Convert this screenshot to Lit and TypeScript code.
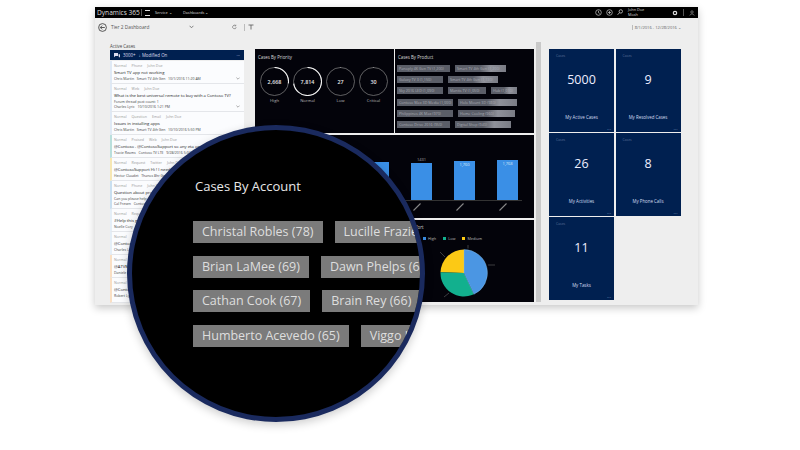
import { LitElement, html, css, svg } from "lit";
import { customElement } from "lit/decorators.js";

const items = [
  { c: "#dfe9f5", h: 23, m: ["Normal", "Phone", "John Doe"], t: "Smart TV app not working", s: ["Chris Martin   Smart TV 4th Gen   10/1/2016 11:20 AM"], chev: true },
  { c: "#dfe9f5", h: 28, m: ["Normal", "Web", "John Doe"], t: "What is the best universal remote to buy with a Contoso TV?", s: ["Forum thread post count: 1", "Charles Lyric   10/10/2016 1:21 PM"], chev: true },
  { c: "#dfe9f5", h: 23, m: ["Normal", "Question", "Email", "John Doe"], t: "Issues in installing apps", s: ["Chris Martin   Smart TV 4th Gen   10/10/2016 5:50 PM"] },
  { c: "#b9dfdc", h: 23, m: ["Normal", "Praised", "Web", "John Doe"], t: "@Contoso . @ContosoSupport so any eta on the fix", s: ["Tracie Reams   Contoso TV LTE   9/28/2016 5:04 PM"] },
  { c: "#f6e7b4", h: 23, m: ["Normal", "Request", "Twitter", "John Doe"], t: "@ContosoSupport Hi ! I need help", s: ["Hector Claudet   Thanos 8hr Gen"] },
  { c: "#c9dff0", h: 28, m: ["Normal", "Phone", "John Doe"], t: "Question about product", s: ["Can you please help me", "Cal Fresen   Contoso TV"] },
  { c: "#e4eef7", h: 23, m: ["Normal", "Request"], t: "#Help this guy", s: ["Noelle Cory"] },
  { c: "#e4eef7", h: 23, m: ["Normal"], t: "@Contoso help", s: ["Charles Lyric"] },
  { c: "#f9dfc4", h: 23, m: ["Normal"], t: "@ATVM team", s: ["Daniele Ross"] },
  { c: "#f9dfc4", h: 25, m: ["Normal"], t: "@Contoso help", s: ["Robert Lyon"] },
];

const rings = [
  { v: "2,668", l: "High", p: 0.27 },
  { v: "7,814", l: "Normal", p: 0.72 },
  { v: "27", l: "Low", p: 0.004 },
  { v: "30", l: "Critical", p: 0.004 },
];

const productRows: [string, number][][] = [
  [["Panoply 4K Gen TV (1,200)", 53], ["Smart TV 4th Gen (1,200)", 51]],
  [["Galaxy TV 3 (1,150)", 46], ["Smart TV 4th Gen (1,130)", 50]],
  [["Sky 2016 LED (1,090)", 46], ["Mantis TV (1,050)", 38], ["Hub (1,010)", 26]],
  [["Contoso Max 3D Media (1,000)", 56], ["Holo Mount 3D (980)", 59]],
  [["Philippines 4K Max (970)", 56], ["Home Cooling (960)", 57]],
  [["Contoso Drive 2016 (950)", 53], ["Digital Shop (940)", 56]],
];

const bars = [
  { v: "", h: 38, inside: false },
  { v: "1431", h: 37, inside: false },
  { v: "1,760", h: 39, inside: true },
  { v: "1,768", h: 40, inside: true },
];

const tiles = [
  { v: "5000", l: "My Active Cases" },
  { v: "9", l: "My Resolved Cases" },
  { v: "26", l: "My Activities" },
  { v: "8", l: "My Phone Calls" },
  { v: "11", l: "My Tasks" },
];

const lens = [
  ["Christal Robles (78)", "Lucille Frazier (70)"],
  ["Brian LaMee (69)", "Dawn Phelps (68)"],
  ["Cathan Cook (67)", "Brain Rey (66)", "Anne Bell (66)"],
  ["Humberto Acevedo (65)", "Viggo Holt (64)"],
];

function slice(a0: number, a1: number, r: number) {
  const p = (a: number) => {
    const t = ((a - 90) * Math.PI) / 180;
    return `${(r * Math.cos(t)).toFixed(2)} ${(r * Math.sin(t)).toFixed(2)}`;
  };
  return `M0 0L${p(a0)}A${r} ${r} 0 ${a1 - a0 > 180 ? 1 : 0} 1 ${p(a1)}Z`;
}

@customElement("app-root")
export class AppRoot extends LitElement {
  static styles = css`
    :host {
      display: block;
      position: relative;
      width: 800px;
      height: 450px;
      overflow: hidden;
      background: #fff;
      font-family: "Open Sans", "Noto Sans", sans-serif;
    }
    .page { padding: 7px 102px 0 95px; }
    .window {
      height: 298px;
      background: #eeeeee;
      box-shadow: 0 3px 8px rgba(0,0,0,.22);
      display: flex;
      flex-direction: column;
    }
    .top {
      height: 11px;
      flex: none;
      background: #000;
      color: #ddd;
      display: flex;
      align-items: center;
      font-size: 3.8px;
      padding: 0 3px 0 2px;
    }
    .brand { font-size: 6.6px; color: #dedede; width: 44px; white-space: nowrap; }
    .sep { width: 1px; height: 7px; background: #555; margin-right: 3px; }
    .burger { width: 5px; height: 4px; border-top: 1px solid #ddd; border-bottom: 1px solid #ddd; margin-right: 5px; position: relative; }
    .nav { white-space: nowrap; }
    .nav.a { width: 28px; }
    .spacer { flex: 1; }
    .top svg { display: block; }
    .ticon { margin-right: 4px; }
    .ticon.last { margin-right: 5px; }
    .who { width: 44px; line-height: 4.5px; font-size: 3.8px; }
    .sub {
      height: 24px;
      box-sizing: border-box;
      flex: none;
      display: flex;
      align-items: center;
      padding: 0 17px 6px 3px;
      font-size: 4.8px;
      color: #555;
    }
    .sub .title { margin-left: 4px; width: 78px; }
    .date { font-size: 4.1px; color: #666; border-left: 1px solid #bbb; padding-left: 2px; }
    .main { flex: 1; display: flex; min-height: 0; padding-left: 15px; }
    .left { width: 134px; flex: none; margin-right: 11px; padding-top: 1px; }
    .left .cap { font-size: 4.4px; color: #444; height: 7px; line-height: 6px; }
    .head {
      height: 10px;
      background: #002050;
      color: #dde;
      font-size: 4.4px;
      display: flex;
      align-items: center;
      padding: 0 4px;
      gap: 3px;
    }
    .list { display: flex; flex-direction: column; gap: 0; padding-top: 1px; }
    .item {
      position: relative;
      background: #fbfcfe;
      border-left: 2px solid;
      border-bottom: 1px solid #e4e6ea;
      box-sizing: border-box;
      padding: 2px 0 0 2px;
      overflow: hidden;
      white-space: nowrap;
    }
    .meta { display: flex; gap: 5px; font-size: 3.6px; color: #999; height: 6px; line-height: 5px; }
    .ttl { font-size: 4.2px; color: #222; line-height: 7px; height: 7px; }
    .ss { font-size: 3.5px; color: #444; line-height: 5.4px; white-space: pre; }
    .chev { position: absolute; right: 4px; bottom: 3px; }
    .charts { width: 279px; flex: none; display: flex; flex-direction: column; gap: 2px; margin: 7px 0 3px; }
    .row1 { height: 84px; display: flex; gap: 1px; }
    .panel { background: #03030a; color: #ddd; position: relative; }
    .row1 .panel { flex: 1; }
    .ptitle { font-size: 4.4px; padding: 5px 0 0 3px; height: 7px; }
    .rings { display: flex; padding: 5.5px 0 0 5px; gap: 4px; }
    .ring { width: 29px; text-align: center; font-size: 4.2px; color: #bbb; }
    .ring svg { display: block; margin-bottom: 2.5px; }
    .ring text { font-size: 5.4px; fill: #e6e6e6; font-weight: 600; text-anchor: middle; font-family: "Open Sans", sans-serif; }
    .ptags { padding: 4px 0 0 2px; display: flex; flex-direction: column; gap: 4.2px; }
    .ptr { display: flex; gap: 5px; }
    .ptag { background: #5b5e68; color: #a9abb3; font-size: 3.7px; height: 7px; line-height: 7px; padding: 0 2px; box-sizing: border-box; white-space: nowrap; overflow: hidden; }
    .ptag.hi { background: linear-gradient(90deg, #5b5e68 50%, #8f919a 70%, #7a7c85); }
    .row2 { height: 83px; }
    .barwrap { height: 65px; display: flex; align-items: flex-end; padding-left: 113px; gap: 22px; border-bottom: 1px solid #333; margin-right: 12px; }
    .bar { width: 21px; background: #3a8fe6; position: relative; }
    .bar span { position: absolute; left: 0; right: 0; top: -6px; text-align: center; font-size: 4px; color: #aaa; }
    .bar span.in { top: 1px; color: #dbe9f8; }
    .tick { display: block; margin-top: 1px; }
    .ticks { display: flex; padding-left: 114px; gap: 33px; }
    .row3 { flex: 1; }
    .legend { position: absolute; left: 168px; top: 15.5px; display: flex; gap: 7px; font-size: 3.8px; color: #bbb; align-items: center; }
    .legend i { display: inline-block; width: 3px; height: 3px; margin-right: 2px; }
    .ptitle2 { position: absolute; left: 138px; top: 4px; font-size: 4.4px; }
    .pie { position: absolute; left: 173px; top: 17px; }
    .scroll { width: 5px; flex: none; background: #c9c9c9; margin: 0 8px 3px 2px; }
    .tiles { display: grid; grid-template-columns: 65px 65px; grid-auto-rows: 83px; gap: 1px 1.5px; align-content: start; margin-top: 7px; }
    .tile {
      background: #002050;
      color: #eef;
      display: flex;
      flex-direction: column;
      align-items: center;
      position: relative;
      padding-top: 21px;
      box-sizing: border-box;
    }
    .tile .v { font-size: 12.5px; line-height: 20px; height: 34px; }
    .tile .l { font-size: 4.4px; margin-top: 10px; color: #d6def0; }
    .tile .c { position: absolute; left: 7px; top: 4px; font-size: 3.4px; color: #5a6f96; }
    .tile .d { position: absolute; right: 3px; bottom: 0; font-size: 5px; line-height: 5px; color: #9fb0d0; }
    .lens {
      position: absolute;
      left: 127px;
      top: 125px;
      width: 298px;
      height: 297px;
      box-sizing: border-box;
      border-radius: 50%;
      border: 5px solid #1a2a5e;
      background: #000;
      overflow: hidden;
      box-shadow: 0 3px 10px rgba(0,0,0,.2);
    }
    .linner { padding: 49px 0 0 61px; width: 420px; }
    .lt { font-size: 13px; line-height: 14px; color: #e8e8e8; margin: 0 0 28px 2px; }
    .lrow { display: flex; gap: 12px; height: 22px; margin-bottom: 12.7px; }
    .ltag {
      background: #7b7b7b;
      color: #dedede;
      font-size: 12.5px;
      line-height: 21px;
      padding: 0 9px;
      white-space: nowrap;
    }
  `;

  render() {
    const r = 14;
    const circ = 2 * Math.PI * r;
    return html`
      <div class="page">
        <div class="window">
          <div class="top">
            <span class="brand">Dynamics 365</span>
            <span class="sep"></span>
            <span class="burger"></span>
            <span class="nav a">Service ⌄</span>
            <span class="nav">Dashboards ⌄</span>
            <span class="spacer"></span>
            <svg class="ticon" width="7" height="7" viewBox="0 0 7 7" fill="none" stroke="#ccc" stroke-width=".7"><circle cx="3.5" cy="3.5" r="2.8"/><path d="M3.5 1.8v1.9l1.2.7"/></svg>
            <svg class="ticon" width="7" height="7" viewBox="0 0 7 7" fill="none" stroke="#ccc" stroke-width=".7"><circle cx="3.5" cy="3.5" r="2.8"/><path d="M3.5 2v3M2 3.5h3"/></svg>
            <svg class="ticon last" width="6" height="7" viewBox="0 0 6 7" fill="none" stroke="#ccc" stroke-width=".8"><circle cx="3.8" cy="2.4" r="1.7"/><path d="M2.6 3.6L.6 5.8"/></svg>
            <span class="who">John Doe<br />Mosh</span>
            <svg width="6" height="6" viewBox="0 0 6 6" style="margin-right:5px"><circle cx="3" cy="3" r="1.7" fill="none" stroke="#ddd" stroke-width="1.2"/></svg>
            <span class="sep" style="margin-right:5px"></span>
            <svg width="6" height="6" viewBox="0 0 6 6" fill="none" stroke="#aaa" stroke-width=".6"><circle cx="3" cy="2" r="1.2"/><path d="M.8 5.5c.3-2 4.1-2 4.4 0"/></svg>
          </div>
          <div class="sub">
            <svg width="9" height="9" viewBox="0 0 9 9" fill="none" stroke="#333" stroke-width=".8"><circle cx="4.5" cy="4.5" r="3.9"/><path d="M6.8 4.5H2.4M4.2 2.6L2.3 4.5l1.9 1.9"/></svg>
            <span class="title">Tier 2 Dashboard</span>
            <svg width="5" height="4" viewBox="0 0 5 4" fill="none" stroke="#666" stroke-width=".8"><path d="M.6.8l1.9 2 1.9-2"/></svg>
            <span style="width:38px"></span>
            <svg width="5" height="6" viewBox="0 0 5 6" fill="none" stroke="#777" stroke-width=".7"><path d="M4.2 3.2a1.8 1.8 0 1 1-.6-1.6M3.8.7v1.2H2.6"/></svg>
            <span style="width:7px"></span>
            <span class="sep" style="margin-right:3px;background:#bbb"></span>
            <svg width="6" height="6" viewBox="0 0 6 6" fill="none" stroke="#555" stroke-width=".8"><path d="M.5 1h5M3 1v4.5"/></svg>
            <span class="spacer"></span>
            <span class="date">8/1/2016 - 12/28/2016 ⌄</span>
          </div>
          <div class="main">
            <div class="left">
              <div class="cap">Active Cases</div>
              <div class="head">
                <svg width="6" height="5" viewBox="0 0 6 5" fill="#dde"><path d="M0 0h4v3H1.4L0 4.2zM4.6 1.2H6v3.6L4.8 3.6H2.4v-.2h2.2z"/></svg>
                <span>3000+</span><span>↓ Modified On</span><span class="spacer"></span><span>···</span>
              </div>
              <div class="list">
                ${items.map(
                  (i) => html`<div class="item" style="height:${i.h}px;border-left-color:${i.c}">
                    <div class="meta">${i.m.map((x) => html`<span>${x}</span>`)}</div>
                    <div class="ttl">${i.t}</div>
                    ${i.s.map((x) => html`<div class="ss">${x}</div>`)}
                    ${i.chev
                      ? html`<svg class="chev" width="4" height="3" viewBox="0 0 4 3" fill="none" stroke="#777" stroke-width=".6"><path d="M.4.6L2 2.2 3.6.6"/></svg>`
                      : ""}
                  </div>`
                )}
              </div>
            </div>
            <div class="charts">
              <div class="row1">
                <div class="panel">
                  <div class="ptitle">Cases By Priority</div>
                  <div class="rings">
                    ${rings.map(
                      (g) => html`<div class="ring">
                        <svg width="29" height="29" viewBox="-14.5 -14.5 29 29">
                          ${svg`<circle r="${r}" fill="none" stroke="#888" stroke-width=".7"/>
                          <circle r="${r}" fill="none" stroke="#f2f2f2" stroke-width="1.1"
                            stroke-dasharray="${g.p * circ} ${circ}" transform="rotate(-90)"/>
                          <text y="2">${g.v}</text>`}
                        </svg>
                        ${g.l}
                      </div>`
                    )}
                  </div>
                </div>
                <div class="panel">
                  <div class="ptitle">Cases By Product</div>
                  <div class="ptags">
                    ${productRows.map(
                      (row) => html`<div class="ptr">${row.map(
                        ([t, w], k) => html`<span class="ptag ${k === row.length - 1 ? "hi" : ""}" style="width:${w}px">${t}</span>`
                      )}</div>`
                    )}
                  </div>
                </div>
              </div>
              <div class="panel row2">
                <div class="barwrap">
                  ${bars.map(
                    (b) => html`<div class="bar" style="height:${b.h}px"><span class="${b.inside ? "in" : ""}">${b.v}</span></div>`
                  )}
                </div>
                <div class="ticks">
                  ${bars.map(
                    () => html`<svg class="tick" width="10" height="10" viewBox="0 0 10 10"><path d="M1.5 8.5L8.5 1.5" stroke="#888" stroke-width="1.1"/></svg>`
                  )}
                </div>
              </div>
              <div class="panel row3">
                <div class="ptitle2">Cases By Effort</div>
                <div class="legend">
                  <span><i style="background:#3a8fe6"></i>High</span>
                  <span><i style="background:#12b08e"></i>Low</span>
                  <span><i style="background:#fcc915"></i>Medium</span>
                </div>
                <svg class="pie" width="72" height="72" viewBox="-36 -36 72 72">
                  ${svg`<path d="${slice(272, 360, 23.5)}" fill="#fcc915"/>
                  <path d="${slice(155, 272, 23.5)}" fill="#12b08e"/>
                  <path d="${slice(0, 155, 23.5)}" fill="#4b96e3" stroke="#9fd0e8" stroke-width=".3"/>
                  <path d="M4 -24.5V-28M24 -8H31M-19 -16L-24 -21M-15 20L-20 24" stroke="#777" stroke-width=".5" fill="none"/>`}
                </svg>
              </div>
            </div>
            <div class="scroll"></div>
            <div class="tiles">
              ${tiles.map(
                (t) => html`<div class="tile">
                  <span class="c">Cases</span>
                  <span class="v">${t.v}</span>
                  <span class="l">${t.l}</span>
                  <span class="d">···</span>
                </div>`
              )}
            </div>
          </div>
        </div>
      </div>
      <div class="lens">
        <div class="linner">
          <div class="lt">Cases By Account</div>
          ${lens.map(
            (row) => html`<div class="lrow">${row.map((t) => html`<span class="ltag">${t}</span>`)}</div>`
          )}
        </div>
      </div>
    `;
  }
}
